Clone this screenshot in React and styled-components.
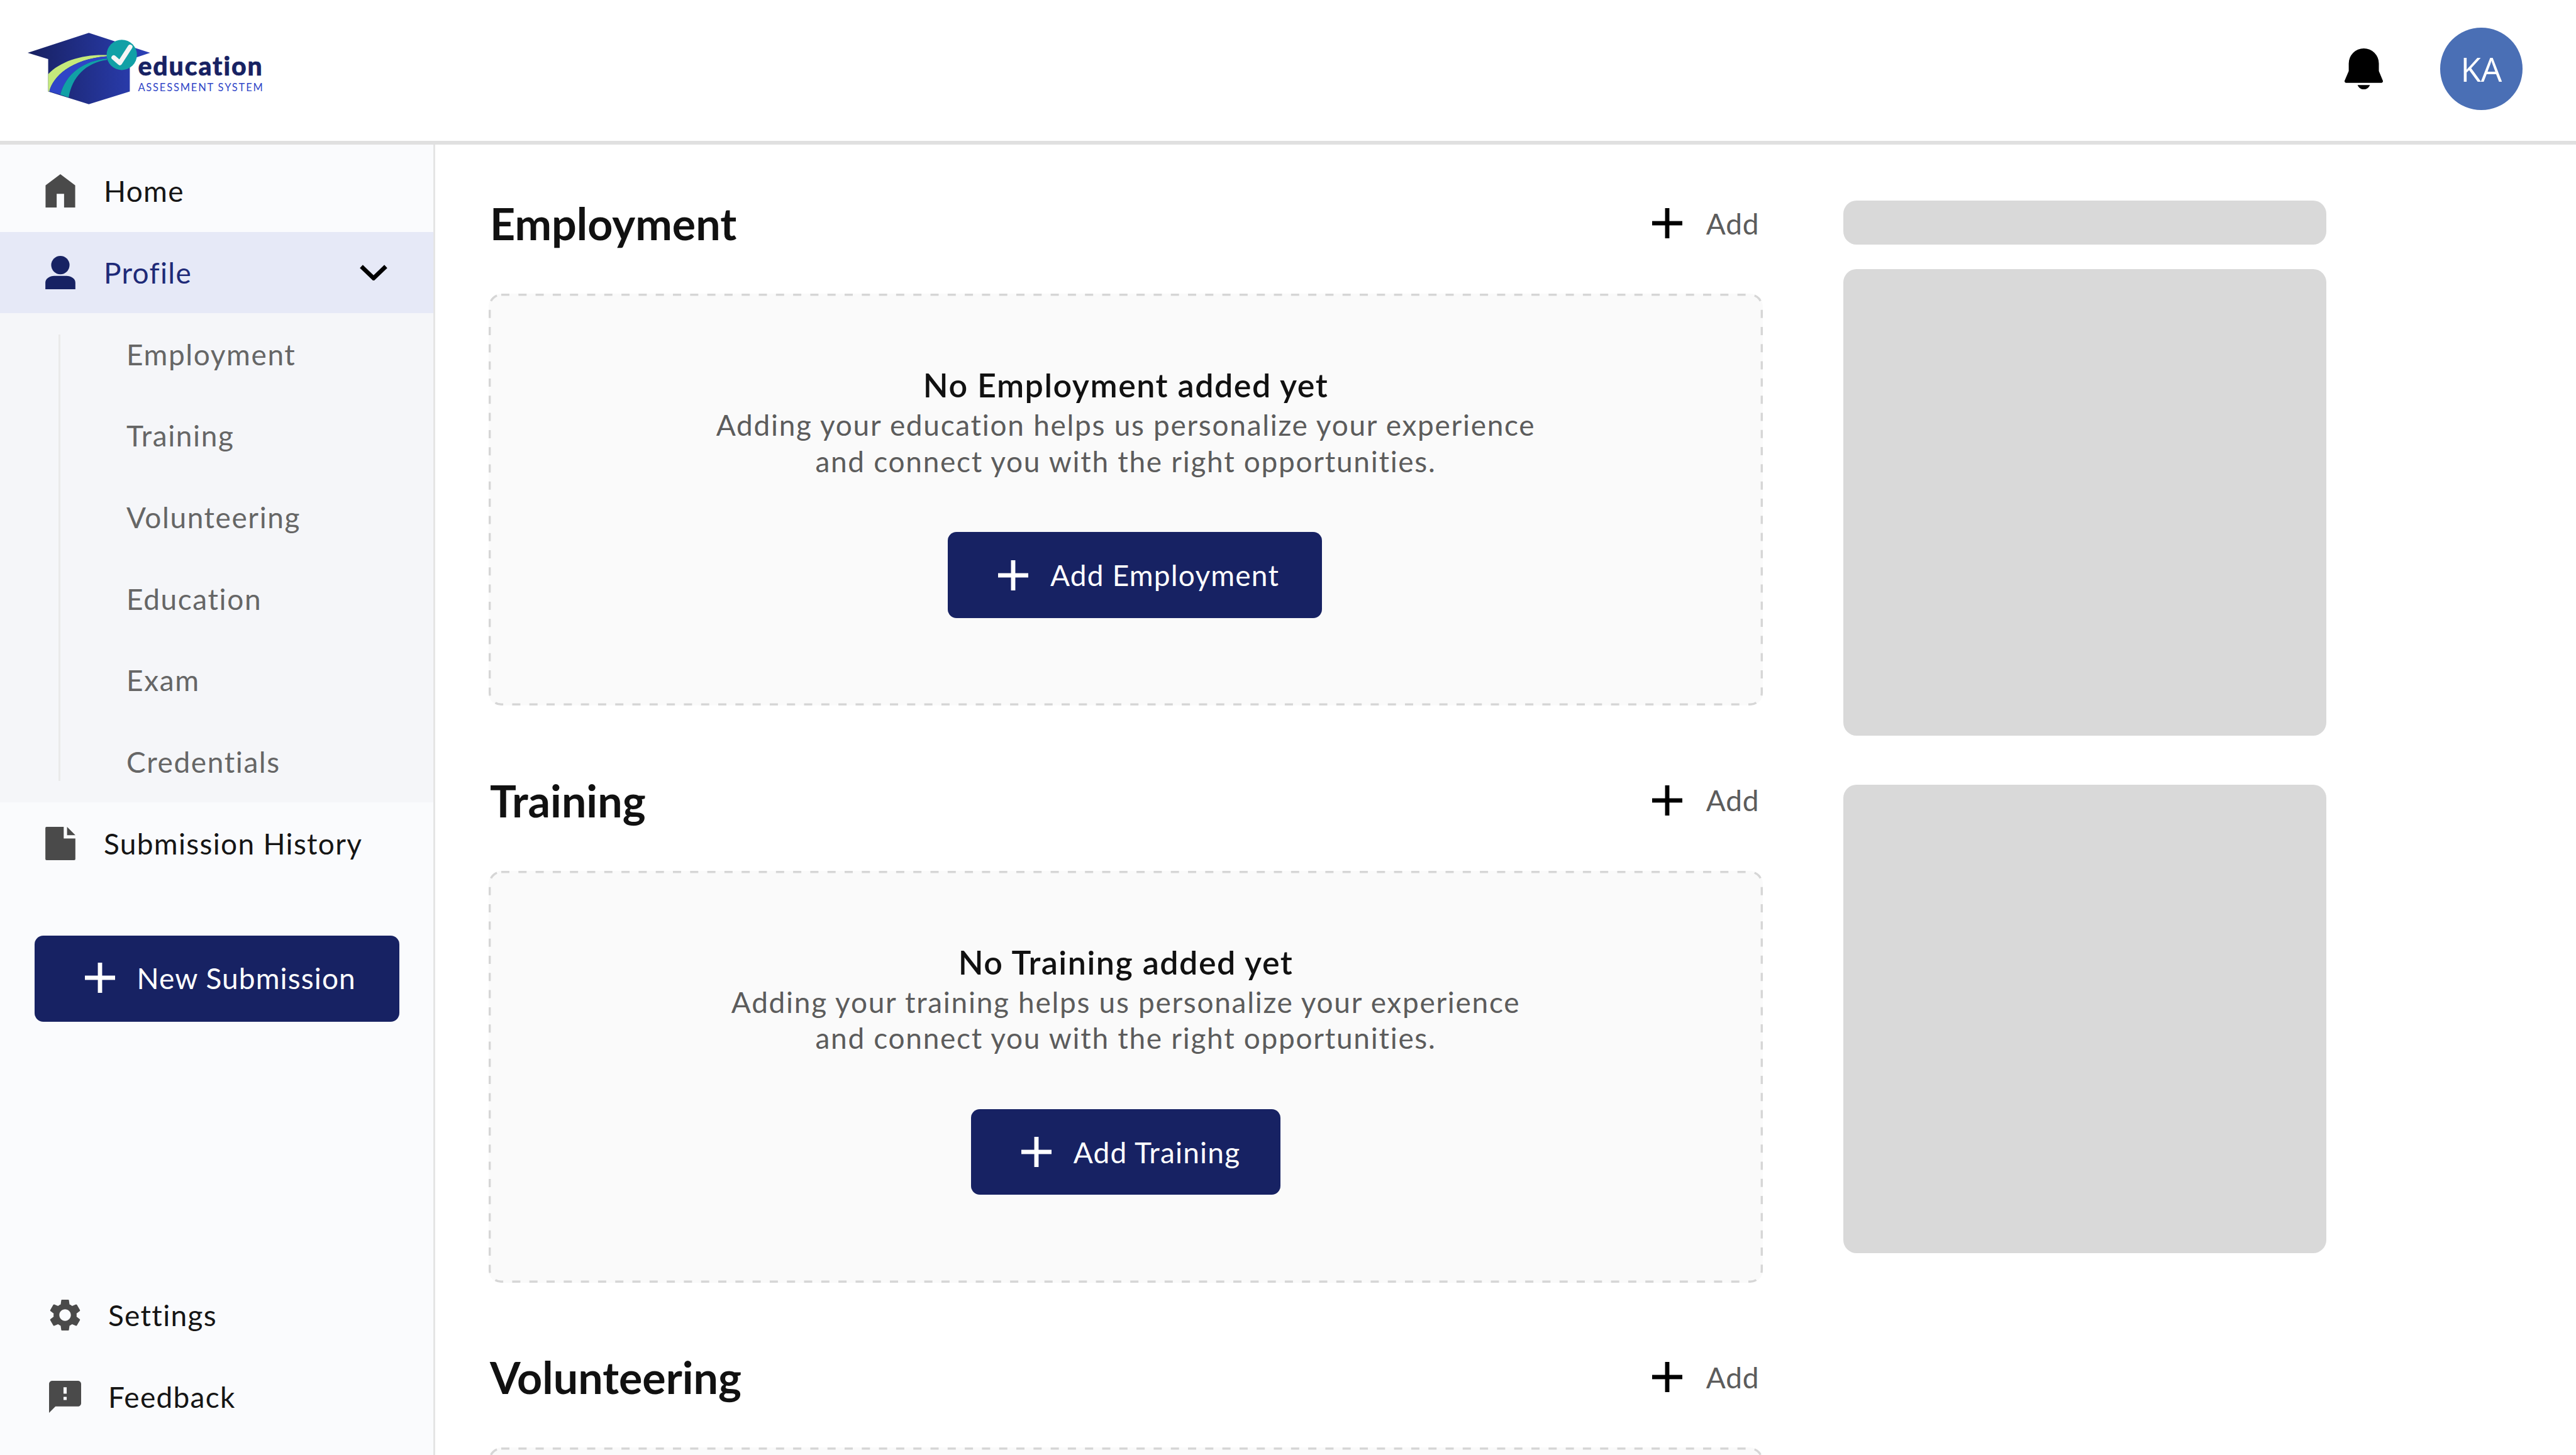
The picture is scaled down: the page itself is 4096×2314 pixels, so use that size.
import React from 'react';
import styled, { createGlobalStyle } from 'styled-components';

const GlobalStyle = createGlobalStyle`
  html, body {
    margin: 0;
    padding: 0;
    width: 4096px;
    height: 2314px;
    overflow: hidden;
    background: #ffffff;
    font-family: Lato, "Noto Sans", sans-serif;
  }
  * { box-sizing: border-box; }
`;

const Page = styled.div`
  width: 4096px;
  height: 2314px;
  display: flex;
  flex-direction: column;
  overflow: hidden;
`;

/* top bar */
const Header = styled.header`
  flex: none;
  height: 229.5px;
  padding: 0 85.4px 4.6px 44.4px;
  border-bottom: 6.8px solid #e0e0e0;
  background: #ffffff;
  display: flex;
  align-items: center;
  justify-content: space-between;
`;

const Logo = styled.div`
  display: flex;
  align-items: flex-start;
`;

const LogoText = styled.div`
  margin: 32.8px 0 0 -20px;
  width: 197px;
`;

const LogoName = styled.div`
  font-size: 41px;
  line-height: 40px;
  font-weight: 900;
  letter-spacing: 1.9px;
  -webkit-text-stroke: 0.6px #172263;
  color: #172263;
  white-space: nowrap;
`;

const LogoTagline = styled.div`
  margin-top: 4.8px;
  font-size: 16.5px;
  line-height: 18px;
  letter-spacing: 1.8px;
  color: #2f45c7;
  white-space: nowrap;
`;

const HeaderRight = styled.div`
  display: flex;
  align-items: center;
  gap: 91px;
`;

const Avatar = styled.div`
  width: 130.5px;
  height: 130.5px;
  border-radius: 50%;
  background: #4a6fb5;
  color: #ffffff;
  display: flex;
  align-items: center;
  justify-content: center;
  font-family: "Open Sans", sans-serif;
  font-size: 53px;
`;

const Body = styled.div`
  flex: 1;
  min-height: 0;
  display: flex;
`;

/* left navigation */
const Sidebar = styled.nav`
  flex: none;
  width: 692px;
  height: 100%;
  padding: 9.4px 0 27.5px;
  background: #fafbfd;
  border-right: 3px solid #e5e5e5;
  display: flex;
  flex-direction: column;
`;

const NavRow = styled.div`
  height: 129.7px;
  flex: none;
  padding: 0 ${(p) => (p.$active ? '73px' : '0')} 0 ${(p) => (p.$low ? '78px' : '72px')};
  display: flex;
  align-items: center;
  gap: ${(p) => (p.$low ? '43px' : '45px')};
  background: ${(p) => (p.$active ? '#e6e9f7' : 'transparent')};
  color: ${(p) => (p.$active ? '#1e2a78' : '#151515')};
  font-size: 46px;
  letter-spacing: 1.3px;
`;

const NavIcon = styled.svg`
  flex: none;
  width: ${(p) => (p.$low ? '51px' : '48px')};
  height: ${(p) => (p.$low ? '51px' : '53px')};
  fill: ${(p) => p.$color || '#4a4a4a'};
`;

const Chevron = styled.svg`
  flex: none;
  width: 44px;
  height: 25px;
  margin-left: auto;
`;

const SubMenu = styled.div`
  flex: none;
  padding-left: 93px;
  background: #f5f6f9;
  display: flex;
`;

const SubRail = styled.div`
  width: 3px;
  margin: 34px 0;
  background: #eaeaea;
`;

const SubList = styled.div`
  padding-left: 105px;
`;

const SubItem = styled.div`
  height: 129.7px;
  display: flex;
  align-items: center;
  color: #666666;
  font-size: 46px;
  letter-spacing: 1.6px;
`;

const NewSubmission = styled.button`
  flex: none;
  align-self: flex-start;
  margin: 82px 0 0 54.6px;
  width: 580px;
  height: 136.5px;
  padding: 0 0 2px 80px;
  border: 0;
  border-radius: 14px;
  background: #172263;
  color: #ffffff;
  font-family: inherit;
  font-size: 46px;
  letter-spacing: 1.1px;
  display: flex;
  align-items: center;
  gap: 35px;
`;

const SidebarBottom = styled.div`
  margin-top: auto;
`;

/* main column */
const Main = styled.main`
  flex: none;
  width: 2026px;
  margin-left: 85px;
  padding-top: 85.5px;
`;

const Section = styled.section`
  margin-bottom: 110.5px;
`;

const SectionHead = styled.div`
  height: 80px;
  padding-right: 5.5px;
  margin-bottom: 72px;
  display: flex;
  align-items: center;
  justify-content: space-between;
`;

const SectionTitle = styled.h2`
  margin: 0;
  padding-left: 2px;
  font-size: 70px;
  font-weight: 700;
  color: #111111;
`;

const AddLink = styled.div`
  display: flex;
  align-items: center;
  gap: 38px;
  color: #5c5c5c;
  font-size: 46px;
  letter-spacing: 0.9px;
`;

const PlusIcon = styled.svg`
  flex: none;
  width: 48px;
  height: 48px;
  fill: ${(p) => p.$color};
`;

const EmptyCard = styled.div`
  position: relative;
  height: 655px;
  padding-top: 114.4px;
  border-radius: 20px;
  background: #fafafa;
  display: flex;
  flex-direction: column;
  align-items: center;
  text-align: center;
`;

// css dashes are too short here, the outline needs 13 on / 14 off
const CardOutline = styled.svg`
  position: absolute;
  top: 0;
  left: 0;
  width: 100%;
  height: 100%;
  pointer-events: none;
`;

const EmptyTitle = styled.div`
  font-size: 52px;
  line-height: 63px;
  font-weight: 600;
  letter-spacing: 1.5px;
  color: #111111;
`;

const EmptyText = styled.p`
  margin: 3px 0 0;
  font-size: 46px;
  line-height: 57.5px;
  letter-spacing: 1.7px;
  color: #5c5c5c;
`;

const AddButton = styled.button`
  margin-top: 84px;
  margin-left: ${(p) => p.$shift || 0}px;
  height: 136.5px;
  padding: 0 ${(p) => p.$padRight}px 0 80px;
  border: 0;
  border-radius: 14px;
  background: #172263;
  color: #ffffff;
  font-family: inherit;
  font-size: 46px;
  letter-spacing: 1.2px;
  display: flex;
  align-items: center;
  gap: 35px;
`;

/* right placeholders */
const Aside = styled.aside`
  flex: none;
  width: 768px;
  margin-left: 128px;
  padding-top: 89px;
  display: flex;
  flex-direction: column;
`;

const Skeleton = styled.div`
  height: ${(p) => p.$h}px;
  margin-bottom: ${(p) => p.$gap}px;
  border-radius: 21px;
  background: #d9d9d9;
`;

const Plus = ({ color = 'currentColor' }) => (
  <PlusIcon viewBox="0 0 56 56" $color={color}>
    <rect x="24" y="0" width="8" height="56" />
    <rect x="0" y="24" width="56" height="8" />
  </PlusIcon>
);

const CapMark = () => (
  <svg width="195" height="114" viewBox="65 93 688 401" style={{ flex: 'none' }}>
    <defs>
      <linearGradient id="capFill" x1="0" y1="0" x2="1" y2="0">
        <stop offset="0" stopColor="#172060" />
        <stop offset="1" stopColor="#2c40b8" />
      </linearGradient>
    </defs>
    <path d="M65 205L408 93L752 205L638 243V422L408 494L180 422V241Z" fill="url(#capFill)" />
    <path d="M510 218C380 212 250 250 180 325V422L188 422C205 340 310 240 510 225Z" fill="#c5ea7b" />
    <path d="M510 225C310 240 205 340 186 422L248 440C280 320 380 250 510 238Z" fill="#2f45c7" />
    <path d="M510 238C380 250 280 320 248 440L295 456C315 340 390 262 510 245Z" fill="#11a0a6" />
    <circle cx="593" cy="217" r="85" fill="#11a0a6" />
    <path d="M548 232L582 262L640 172" fill="none" stroke="#f5f5f5" strokeWidth="26" strokeLinecap="round" strokeLinejoin="round" />
  </svg>
);

const Bell = () => (
  <svg width="61" height="65" viewBox="0 0 71 76" fill="#000000">
    <path d="M7.6 28a28 28 0 0 1 56 0V42L71 60a3 3 0 0 1-3 4H3a3 3 0 0 1-3-4L7.6 42Z" />
    <path d="M24 68H47C45 73 41 76 35.5 76S26 73 24 68Z" />
  </svg>
);

// the volunteering card runs off the bottom of the window, only its top edge shows
const sections = [
  {
    name: 'Employment',
    text: 'Adding your education helps us personalize your experience',
    shift: 29,
    padRight: 68,
  },
  {
    name: 'Training',
    text: 'Adding your training helps us personalize your experience',
    shift: 0,
    padRight: 64,
  },
  { name: 'Volunteering' },
];

const subItems = ['Employment', 'Training', 'Volunteering', 'Education', 'Exam', 'Credentials'];

const App = () => {
  return (
    <Page>
      <GlobalStyle />
      <Header>
        <Logo>
          <CapMark />
          <LogoText>
            <LogoName>education</LogoName>
            <LogoTagline>ASSESSMENT SYSTEM</LogoTagline>
          </LogoText>
        </Logo>
        <HeaderRight>
          <Bell />
          <Avatar>KA</Avatar>
        </HeaderRight>
      </Header>
      <Body>
        <Sidebar>
          <NavRow>
            <NavIcon viewBox="0 0 56 63">
              <path d="M28 0L56 21V63H35V37H21V63H0V21Z" />
            </NavIcon>
            Home
          </NavRow>
          <NavRow $active>
            <NavIcon viewBox="0 0 54 60" $color="#172263">
              <circle cx="27" cy="16.5" r="16.5" />
              <path d="M0 60V48C0 41 8 36 16 36H38C46 36 54 41 54 48V60Z" />
            </NavIcon>
            Profile
            <Chevron viewBox="0 0 52 29">
              <path d="M3 3L26 25L49 3" fill="none" stroke="#000000" strokeWidth="8" />
            </Chevron>
          </NavRow>
          <SubMenu>
            <SubRail />
            <SubList>
              {subItems.map((item) => (
                <SubItem key={item}>{item}</SubItem>
              ))}
            </SubList>
          </SubMenu>
          <NavRow>
            <NavIcon viewBox="0 0 54 60">
              <path d="M2 0H33V21H54V58a2 2 0 0 1-2 2H2a2 2 0 0 1-2-2V2a2 2 0 0 1 2-2Z" />
              <path d="M39 0L54 15H39Z" />
            </NavIcon>
            Submission History
          </NavRow>
          <NewSubmission>
            <Plus />
            New Submission
          </NewSubmission>
          <SidebarBottom>
            <NavRow $low>
              <NavIcon $low viewBox="2.5 2 19 20">
                <path d="M19.14 12.94c.04-.3.06-.61.06-.94 0-.32-.02-.64-.07-.94l2.03-1.58c.18-.14.23-.41.12-.61l-1.92-3.32c-.12-.22-.37-.29-.59-.22l-2.39.96c-.5-.38-1.03-.7-1.62-.94l-.36-2.54c-.04-.24-.24-.41-.48-.41h-3.84c-.24 0-.43.17-.47.41l-.36 2.54c-.59.24-1.13.57-1.62.94l-2.39-.96c-.22-.08-.47 0-.59.22L2.74 8.87c-.12.21-.08.47.12.61l2.03 1.58c-.05.3-.09.63-.09.94s.02.64.07.94l-2.03 1.58c-.18.14-.23.41-.12.61l1.92 3.32c.12.22.37.29.59.22l2.39-.96c.5.38 1.03.7 1.62.94l.36 2.54c.05.24.24.41.48.41h3.84c.24 0 .44-.17.47-.41l.36-2.54c.59-.24 1.13-.56 1.62-.94l2.39.96c.22.08.47 0 .59-.22l1.92-3.32c.12-.22.07-.47-.12-.61l-2.01-1.58zM12 15.6c-1.98 0-3.6-1.62-3.6-3.6s1.62-3.6 3.6-3.6 3.6 1.62 3.6 3.6-1.62 3.6-3.6 3.6z" />
              </NavIcon>
              Settings
            </NavRow>
            <NavRow $low>
              <NavIcon $low viewBox="2 2 20 20">
                <path d="M20 2H4c-1.1 0-1.99.9-1.99 2L2 22l4-4h14c1.1 0 2-.9 2-2V4c0-1.1-.9-2-2-2zm-7 12h-2v-2h2v2zm0-4h-2V6h2v4z" />
              </NavIcon>
              Feedback
            </NavRow>
          </SidebarBottom>
        </Sidebar>
        <Main>
          {sections.map((section) => (
            <Section key={section.name}>
              <SectionHead>
                <SectionTitle>{section.name}</SectionTitle>
                <AddLink>
                  <Plus color="#000000" />
                  Add
                </AddLink>
              </SectionHead>
              <EmptyCard>
                <CardOutline viewBox="0 0 2026 655">
                  <rect
                    x="1.7"
                    y="1.7"
                    width="2022.6"
                    height="651.6"
                    rx="18.3"
                    fill="none"
                    stroke="#d6d6d6"
                    strokeWidth="3.4"
                    strokeDasharray="13 14.3"
                  />
                </CardOutline>
                {section.text && (
                  <>
                    <EmptyTitle>No {section.name} added yet</EmptyTitle>
                    <EmptyText>
                      {section.text}
                      <br />
                      and connect you with the right opportunities.
                    </EmptyText>
                    <AddButton $shift={section.shift} $padRight={section.padRight}>
                      <Plus />
                      Add {section.name}
                    </AddButton>
                  </>
                )}
              </EmptyCard>
            </Section>
          ))}
        </Main>
        <Aside>
          <Skeleton $h={70.5} $gap={39} />
          <Skeleton $h={742} $gap={78} />
          <Skeleton $h={745} $gap={0} />
        </Aside>
      </Body>
    </Page>
  );
};

export default App;
